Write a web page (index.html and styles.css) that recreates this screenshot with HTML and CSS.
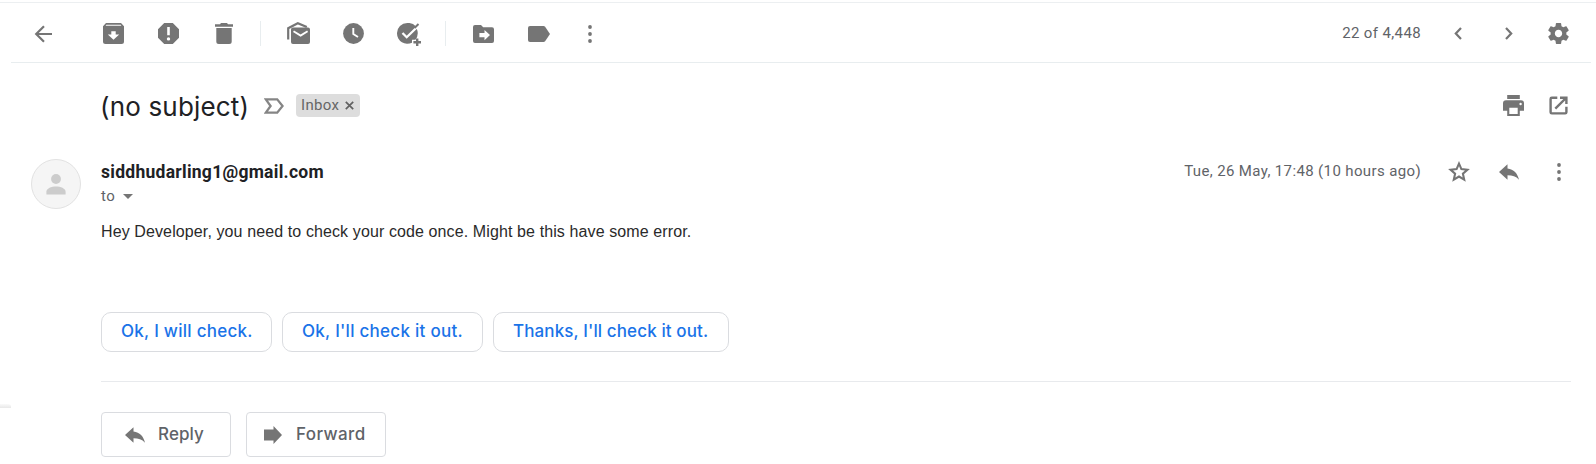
FILE: index.html
```
<!DOCTYPE html>
<html lang="en">
<head>
<meta charset="utf-8">
<title>Mail</title>
<link rel="stylesheet" href="styles.css">
</head>
<body>
<svg class="defs" aria-hidden="true">
  <symbol id="reply" viewBox="0 0 20 16"><path d="M8.500 4.600V.3L0 8.100l8.500 7.600v-4.400c5 0 8.500 1.200 11.500 4.400C18.600 9.500 14.800 5.500 8.500 4.600z"/></symbol>
  <symbol id="dots" viewBox="0 0 6 20"><circle cx="3" cy="3" r="1.900"/><circle cx="3" cy="10" r="1.900"/><circle cx="3" cy="17" r="1.900"/></symbol>
</svg>
<div class="side-edge"></div>
<header class="toolbar">
  <button class="tool back"><svg width="19" height="18" viewBox="0 0 19 18"><path d="M18 9H2.500M10 1.200 2.200 9l7.800 7.800" fill="none" stroke="#757575" stroke-width="2.200"/></svg></button>
  <button class="tool"><svg width="21" height="21" viewBox="0 0 21 21"><path fill-rule="evenodd" d="M3 0h15l3 3.300V18.500A2.500 2.500 0 0 1 18.500 21h-16A2.500 2.500 0 0 1 0 18.500V3.300zM3.300 1.700 2.600 2.700H18.400L17.700 1.700zM8.300 8.300v3.300H4.800l5.700 5.200 5.700-5.200h-3.500V8.300z"/></svg></button>
  <button class="tool"><svg width="21" height="21" viewBox="0 0 21 21"><path fill-rule="evenodd" d="M6.200 0h8.600L21 6.200v8.600L14.800 21H6.200L0 14.800V6.200zM9.200 4v8.300h2.600V4zM10.500 14.200a1.700 1.700 0 1 0 0 3.400 1.700 1.700 0 0 0 0-3.400z"/></svg></button>
  <button class="tool"><svg width="18" height="21" viewBox="0 0 18 21"><path d="M6 0h6l1 1.200h5v2.500H0V1.200h5zM1.300 5h15.400v13.500a2.500 2.500 0 0 1-2.500 2.500H3.800a2.500 2.500 0 0 1-2.500-2.500z"/></svg></button>
  <span class="divider"></span>
  <button class="tool mail"><svg width="23" height="22" viewBox="0 0 23 22"><path d="M1.200 17.500V6.200L10.800 1.200l9 3.900" fill="none" stroke="#757575" stroke-width="2.200"/><path d="M6 5.500h15a2 2 0 0 1 2 2V20a2 2 0 0 1-2 2H6a2 2 0 0 1-2-2V7.500a2 2 0 0 1 2-2z"/><path d="m6.500 9.300 7.100 4.300 7-4.300" fill="none" stroke="#fff" stroke-width="1.900"/></svg></button>
  <button class="tool"><svg width="21" height="21" viewBox="0 0 21 21"><circle cx="10.500" cy="10.500" r="10.400"/><path d="M10.300 5v6l4.700 3" fill="none" stroke="#fff" stroke-width="1.900"/></svg></button>
  <button class="tool task"><svg width="24" height="23" viewBox="0 0 24 23"><path d="M10.300 0A10.300 10.300 0 0 0 0 10.500a10.300 10.300 0 0 0 15 9.200v-3h3.400A10.300 10.300 0 0 0 20.500 8L19 3.500A10.300 10.300 0 0 0 10.300 0z"/><path d="m5.500 10 4.200 4.200L21 3.200" fill="none" stroke="#fff" stroke-width="2.300"/><path d="m17.500 5 4-4" fill="none" stroke="#757575" stroke-width="1.900"/><path d="M20.200 15.400V23M16.400 19.200H24" fill="none" stroke="#757575" stroke-width="2.400"/></svg></button>
  <span class="divider"></span>
  <button class="tool"><svg width="21" height="18" viewBox="0 0 21 18"><path fill-rule="evenodd" d="M2 0h6l2.200 2.300H19a2 2 0 0 1 2 2V16a2 2 0 0 1-2 2H2a2 2 0 0 1-2-2V2a2 2 0 0 1 2-2zM11.500 5v3H6.400v4.200h5.100v3l5.500-5.100z"/></svg></button>
  <button class="tool"><svg width="22" height="16" viewBox="0 0 22 16"><path d="M2 0h13.500a2 2 0 0 1 1.600.8L22 8l-4.900 7.200a2 2 0 0 1-1.600.8H2a2 2 0 0 1-2-2V2a2 2 0 0 1 2-2z"/></svg></button>
  <button class="tool more"><svg width="6" height="20"><use href="#dots"/></svg></button>
  <span class="count">22 of 4,448</span>
  <button class="tool nav"><svg width="8" height="13" viewBox="0 0 8 13"><path d="M7 1 1.800 6.500 7 12" fill="none" stroke="#757575" stroke-width="2.200"/></svg></button>
  <button class="tool nav next"><svg width="8" height="13" viewBox="0 0 8 13"><path d="m1 1 5.200 5.500L1 12" fill="none" stroke="#757575" stroke-width="2.200"/></svg></button>
  <button class="tool nav"><svg width="21" height="21" viewBox="2 2 20 20"><path d="M19.430 12.980c.04-.32.070-.64.070-.98s-.03-.66-.07-.98l2.110-1.650c.19-.15.240-.42.120-.64l-2-3.460c-.12-.22-.39-.3-.61-.22l-2.490 1c-.52-.4-1.080-.73-1.690-.98l-.38-2.650C14.460 2.180 14.250 2 14 2h-4c-.25 0-.46.180-.49.420l-.38 2.650c-.61.250-1.170.59-1.690.98l-2.490-1c-.23-.09-.49 0-.61.220l-2 3.460c-.13.220-.07.490.12.640l2.110 1.650c-.04.32-.07.65-.07.98s.03.660.07.980l-2.110 1.650c-.19.150-.24.420-.12.640l2 3.460c.12.220.39.300.61.220l2.490-1c.52.400 1.080.73 1.690.98l.38 2.650c.03.240.24.420.49.420h4c.25 0 .46-.18.490-.42l.38-2.650c.61-.25 1.170-.59 1.690-.98l2.490 1c.23.090.49 0 .61-.22l2-3.460c.12-.22.070-.49-.12-.64l-2.110-1.650zM12 15.500c-1.930 0-3.500-1.570-3.500-3.500s1.570-3.500 3.500-3.500 3.500 1.570 3.500 3.500-1.570 3.500-3.500 3.500z"/></svg></button>
</header>
<main class="thread">
  <section class="subject-row">
    <h1 class="subject">(no subject)</h1>
    <svg class="marker" width="20" height="16" viewBox="0 0 20 16"><path d="M1.800 1.300h11.400L18.600 8l-5.400 6.700H1.800L6.600 8z" fill="none" stroke="#858585" stroke-width="2.300"/></svg>
    <span class="chip"><span class="chip-text">Inbox</span><svg width="9" height="9" viewBox="0 0 9 9"><path d="m.8.8 7.400 7.400M8.200.8.8 8.200" stroke="#616161" stroke-width="1.700"/></svg></span>
    <span class="actions">
      <button class="tool small"><svg width="21" height="21" viewBox="0 0 21 21"><path fill-rule="evenodd" d="M4.200 0h12.600v4H4.200zM3 5.300h15a3 3 0 0 1 3 3v7.400h-4.200V21H4.200v-5.300H0V8.300a3 3 0 0 1 3-3zM6.300 12.800v6.100h8.400v-6.100zM17.600 7.800a1.200 1.200 0 1 0 0 2.400 1.200 1.200 0 0 0 0-2.400z"/></svg></button>
      <button class="tool nav"><svg width="19" height="19" viewBox="0 0 19 19"><path d="M8.300 1.700H2.800a1.200 1.200 0 0 0-1.200 1.200v13.300c0 .7.500 1.200 1.200 1.200h13.400c.7 0 1.200-.5 1.200-1.200v-5.500M11 1.700h6.400v6.200M17 2 6.300 12.700" fill="none" stroke="#757575" stroke-width="2.400"/></svg></button>
    </span>
  </section>
  <section class="message">
    <div class="avatar"><svg width="20" height="21" viewBox="0 0 20 21"><circle cx="10" cy="5" r="4.900"/><path d="M.4 20.500v-2.700c0-3.400 5-5.300 9.600-5.300s9.600 1.900 9.600 5.300v2.700z"/></svg></div>
    <div class="content">
      <div class="sender-row">
        <span class="sender">siddhudarling1@gmail.com</span>
        <span class="time">Tue, 26 May, 17:48 (10 hours ago)</span>
        <button class="tool nav"><svg width="22" height="21" viewBox="0 0 22 21"><path d="m11 2.600 2.400 5.500 6 .6-4.500 4 1.300 5.900L11 15.500l-5.200 3.100 1.300-5.900-4.500-4 6-.6z" fill="none" stroke="#757575" stroke-width="2.100"/></svg></button>
        <button class="tool nav"><svg width="20" height="16"><use href="#reply"/></svg></button>
        <button class="tool nav"><svg width="6" height="20"><use href="#dots"/></svg></button>
      </div>
      <div class="recipient"><span class="to">to</span><svg width="10" height="5" viewBox="0 0 10 5"><path d="M0 0h10L5 5z"/></svg></div>
      <p class="body">Hey Developer, you need to check your code once. Might be this have some error.</p>
      <div class="suggestions">
        <button class="suggest s1">Ok, I will check.</button>
        <button class="suggest s2">Ok, I'll check it out.</button>
        <button class="suggest s3">Thanks, I'll check it out.</button>
      </div>
      <div class="respond">
        <button class="respond-btn rep"><svg width="20" height="16"><use href="#reply"/></svg><span>Reply</span></button>
        <button class="respond-btn fwd"><svg width="18" height="18" viewBox="0 0 18 18"><path d="M0 3.600h9.500V0L18 9l-8.500 9v-3.600H0z"/></svg><span>Forward</span></button>
      </div>
    </div>
  </section>
</main>
</body>
</html>
```
FILE: styles.css
```
* { box-sizing: border-box; }
body {
  margin: 2px 0 0;
  height: 462px;
  overflow: hidden;
  background: #fff;
  color: #202124;
  font-family: Roboto, sans-serif;
  border-top: 1px solid #eceff1;
}
button { appearance: none; border: 0; background: none; padding: 0; margin: 0; font: inherit; }
svg { display: block; fill: #757575; flex: none; }
.defs { position: absolute; width: 0; height: 0; }
.side-edge {
  position: absolute;
  left: 0;
  top: 404px;
  width: 11px;
  height: 4px;
  background: linear-gradient(#fafafa, #e8e8e8);
  border-top-right-radius: 3px;
}

/* Toolbar */
.toolbar {
  display: flex;
  align-items: center;
  height: 60px;
  margin: 0 5px 0 11px;
  padding: 2px 8px 0 0;
  border-bottom: 1px solid #e8edef;
}
.tool { width: 55px; flex: none; display: flex; justify-content: center; align-items: center; }
.back { width: 66px; margin-right: 9px; padding-right: 1px; }
.mail { padding-bottom: 1px; }
.more { width: 46px; padding-left: 1px; }
.task { padding-left: 1px; padding-top: 2px; }
.nav { width: 50px; }
.next { padding-left: 1px; }
.small { width: 40px; }
.divider { width: 1px; height: 25px; margin: 0 10px 0 9px; background: #e8edef; }
.count { margin-left: auto; margin-right: 12px; font-size: 15px; letter-spacing: 0.370px; color: #5f6368; line-height: 20px; padding-bottom: 2px; }

/* Subject */
.subject-row { display: flex; align-items: center; height: 85px; padding: 0 13px 0 101px; }
.subject { margin: 0; padding-top: 2px; width: 163px; font: 400 26px/34px Inter, sans-serif; letter-spacing: 0.180px; text-indent: -1px; white-space: nowrap; }
.marker { margin-right: 12px; }
.chip { display: flex; align-items: center; width: 64px; height: 23px; padding-left: 5px; gap: 6px; border-radius: 4px; background: #ddd; color: #666; font-size: 15px; letter-spacing: 0.300px; line-height: 20px; }
.chip-text { width: 38px; padding-bottom: 1px; }
.actions { display: flex; align-items: center; margin-left: auto; }

/* Message */
.message { display: flex; padding: 11px 12px 0 31px; }
.avatar { width: 50px; height: 50px; margin-right: 20px; border: 1px solid #e2e2e2; border-radius: 50%; background: #f5f5f5; display: flex; align-items: center; justify-content: center; }
.avatar svg { fill: #ccc; }
.content { flex: 1; }
.sender-row { display: flex; align-items: center; height: 25px; }
.sender { font-size: 17.500px; font-weight: 700; line-height: 24px; letter-spacing: 0.270px; }
.time { margin-left: auto; margin-right: 13px; padding-bottom: 2px; font-size: 15px; letter-spacing: 0.370px; color: #5f6368; }
.recipient { display: flex; align-items: center; gap: 8px; height: 24px; color: #5f6368; font-size: 15px; letter-spacing: 0.370px; }
.to { width: 14px; }
.body { margin: 13px 0 0; font: 16px/22px "Liberation Sans", Arial, sans-serif; letter-spacing: 0.110px; color: #2a2a2a; white-space: nowrap; }
.suggestions { display: flex; gap: 10px; margin-top: 69px; margin-right: 13px; padding-bottom: 29px; border-bottom: 1px solid #e8eaed; }
.suggest { flex: none; height: 40px; border: 1px solid #dadce0; border-radius: 10px; color: #1a73e8; font: 500 17px/36px Inter, sans-serif; text-align: left; padding: 0 0 2px 19px; white-space: nowrap; }
.s1 { width: 171px; letter-spacing: 0.270px; }
.s2 { width: 201px; letter-spacing: 0.270px; }
.s3 { width: 236px; letter-spacing: 0.110px; }
.respond { display: flex; gap: 15px; margin-top: 30px; }
.respond-btn { display: flex; align-items: center; height: 45px; border: 1px solid #dadce0; border-radius: 4px; color: #5f6368; font: 500 17px/24px Inter, sans-serif; white-space: nowrap; }
.respond-btn span { padding-bottom: 2px; }
.rep { width: 130px; padding-left: 23px; gap: 13px; letter-spacing: 0.100px; }
.fwd { width: 140px; padding-left: 17px; gap: 14px; letter-spacing: 0.400px; }
```
